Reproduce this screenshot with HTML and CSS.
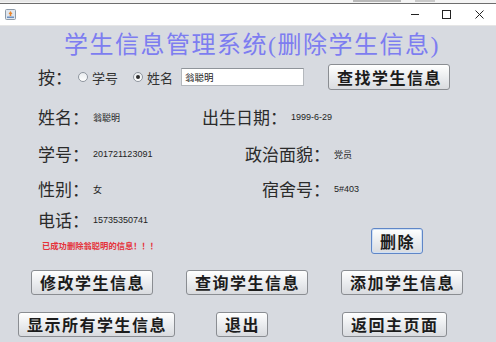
FILE: index.html
```html
<!DOCTYPE html>
<html lang="zh-CN">
<head>
<meta charset="utf-8">
<title>学生信息管理系统</title>
<link rel="stylesheet" href="styles.css">
</head>
<body>
<div class="strip"><span class="rem rem-a"></span><span class="rem rem-b"></span><span class="rem rem-c"></span></div>
<header class="titlebar">
  <svg class="app-icon" width="11" height="11" viewBox="0 0 11 11">
    <rect x="0.5" y="0.5" width="10" height="10" rx="1" fill="#dfe6ee" stroke="#8d9aa8"/>
    <path d="M5.5 2 L7.5 5 L6.3 5 L6.3 7 L4.7 7 L4.7 5 L3.5 5 Z" fill="#e9852c"/>
    <rect x="2" y="7.5" width="7" height="1.5" fill="#6d8fbf"/>
  </svg>
  <div class="controls">
    <span class="ctl-min"></span>
    <span class="ctl-max"></span>
    <svg class="ctl-close" width="9" height="9" viewBox="0 0 9 9"><path d="M0.5 0.5 L8.5 8.5 M8.5 0.5 L0.5 8.5" stroke="#222" stroke-width="1"/></svg>
  </div>
</header>
<main class="content">
  <h1 class="title">学生信息管理系统(删除学生信息)</h1>
  <div class="search">
    <span class="key">按：</span>
    <label class="radio"><span class="dot"></span>学号</label>
    <label class="radio radio-on"><span class="dot"></span>姓名</label>
    <div class="field">翁聪明</div>
    <button class="btn btn-find">查找学生信息</button>
  </div>
  <div class="row row-1">
    <div class="left"><span class="key">姓名：</span><span class="val">翁聪明</span></div>
    <span class="key">出生日期：</span><span class="val">1999-6-29</span>
  </div>
  <div class="row row-2">
    <div class="left"><span class="key">学号：</span><span class="val">201721123091</span></div>
    <span class="key rk">政治面貌：</span><span class="val">党员</span>
  </div>
  <div class="row row-3">
    <div class="left"><span class="key">性别：</span><span class="val">女</span></div>
    <span class="key rk">宿舍号：</span><span class="val">5#403</span>
  </div>
  <div class="bottom">
    <div class="col">
      <div class="row row-4"><span class="key">电话：</span><span class="val">15735350741</span></div>
      <p class="msg">已成功删除翁聪明的信息！！！</p>
    </div>
    <button class="btn btn-del">删除</button>
  </div>
  <div class="btnrow btnrow-1">
    <button class="btn">修改学生信息</button>
    <button class="btn">查询学生信息</button>
    <button class="btn">添加学生信息</button>
  </div>
  <div class="btnrow btnrow-2">
    <button class="btn">显示所有学生信息</button>
    <button class="btn btn-exit">退出</button>
    <button class="btn btn-home">返回主页面</button>
  </div>
</main>
</body>
</html>
```

FILE: styles.css
```css
* { box-sizing: border-box; }
html, body { margin: 0; padding: 0; }
body {
  width: 496px;
  height: 342px;
  overflow: hidden;
  background: #d7dae0;
  font-family: "Noto Sans CJK SC", "Liberation Serif", serif;
  color: #2b2b2b;
}
.strip {
  height: 4px;
  background: #f4f4f4;
  border-bottom: 1px solid #6e6e6e;
  display: flex;
}
.rem { display: block; height: 2px; }
.rem-a { width: 40px; background: #e7e7e7; margin-left: 0; }
.rem-b { width: 48px; background: #b9b9b9; margin-left: 313px; }
.rem-c { width: 20px; background: #c9c9c9; margin-left: 14px; }
.titlebar {
  height: 22px;
  background: #ffffff;
  border-bottom: 1px solid #e6e6e6;
  display: flex;
  align-items: center;
  padding-left: 5px;
}
.app-icon { display: block; }
.controls {
  margin-left: auto;
  display: flex;
  align-items: center;
  height: 100%;
}
.ctl-min {
  display: block;
  width: 8px;
  height: 1px;
  background: #222;
  margin-right: 23px;
}
.ctl-max {
  display: block;
  width: 9px;
  height: 9px;
  border: 1px solid #222;
  margin-right: 24px;
}
.ctl-close { display: block; margin-right: 12px; }

.content { display: block; }
.title {
  margin: 4px 0 0;
  padding-left: 8px;
  height: 30px;
  line-height: 30px;
  text-align: center;
  font-weight: normal;
  font-size: 24px;
  letter-spacing: 1.5px;
  color: #7d7df0;
  font-family: "Liberation Serif", "Noto Sans CJK SC", serif;
}
.key {
  font-size: 17px;
  line-height: 30px;
  white-space: nowrap;
  color: #2b2b2b;
}
.val {
  font-family: "Liberation Sans", "Noto Sans CJK SC", sans-serif;
  font-size: 9px;
  margin-left: 4px;
  color: #1e1e1e;
  white-space: nowrap;
}
.search {
  display: flex;
  align-items: center;
  height: 26px;
  margin-top: 4px;
  padding-left: 38px;
}
.radio {
  display: flex;
  align-items: center;
  font-size: 13px;
  color: #333;
  margin-left: 6px;
}
.radio + .radio { margin-left: 15px; }
.dot {
  width: 10px;
  height: 10px;
  border-radius: 50%;
  border: 1px solid #8f969f;
  background: linear-gradient(#e9ecef, #ffffff);
  margin-right: 4px;
  display: flex;
  align-items: center;
  justify-content: center;
}
.radio-on .dot::after {
  content: "";
  width: 4px;
  height: 4px;
  border-radius: 50%;
  background: #2c2c2c;
}
.field {
  width: 123px;
  height: 18px;
  margin-left: 8px;
  background: #fff;
  border: 1px solid #b4b8bd;
  border-top-color: #8f949a;
  font-size: 9.5px;
  line-height: 16px;
  padding-left: 3px;
  color: #222;
}
.btn {
  font-family: "Noto Sans CJK SC", "Liberation Serif", serif;
  font-weight: bold;
  font-size: 16px;
  letter-spacing: 1.5px;
  height: 26px;
  line-height: 24px;
  padding: 0 7px 0 8px;
  border: 1px solid #8a8d92;
  border-radius: 3px;
  background: linear-gradient(#ffffff, #e9ebee 55%, #d9dbdf);
  color: #1c1c1c;
  white-space: nowrap;
}
.btn-find { margin-left: 24px; }
.row {
  display: flex;
  align-items: center;
  height: 30px;
  padding-left: 38px;
}
.left { width: 164px; display: flex; align-items: center; }
.rk { width: 128px; text-align: right; }
.row-1 { margin-top: 12px; }
.row-2 { margin-top: 7px; }
.row-3 { margin-top: 5px; }
.bottom {
  display: flex;
  align-items: flex-end;
  margin-top: 1px;
}
.col { width: 371px; }
.row-4 { margin: 0; }
.msg {
  margin: 3px 0 2px 42px;
  height: 14px;
  line-height: 14px;
  font-size: 8.3px;
  font-weight: bold;
  color: #e5323a;
  white-space: nowrap;
}
.btn-del {
  border-color: #5f86c7;
  box-shadow: inset 0 0 0 1px #cfe0f5;
}
.btnrow {
  display: flex;
  align-items: center;
}
.btnrow .btn { height: 25px; line-height: 23px; }
.btnrow-1 { margin-top: 16px; padding-left: 31px; gap: 33px; }
.btnrow-2 { margin-top: 17px; padding-left: 18px; }
.btn-exit { margin-left: 41px; }
.btn-home { margin-left: 74px; }
```
